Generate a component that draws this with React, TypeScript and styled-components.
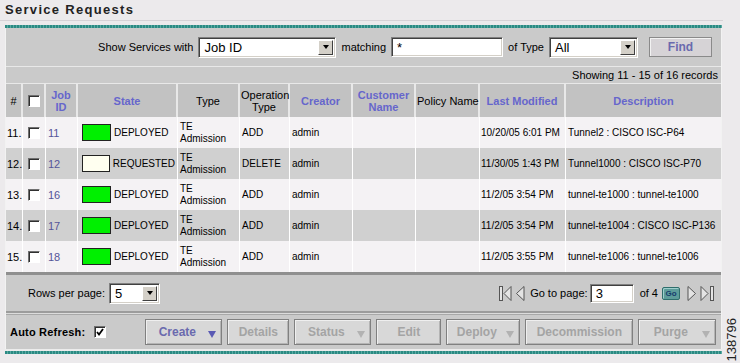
import React from 'react';
import styled, { createGlobalStyle } from 'styled-components';

const GlobalStyle = createGlobalStyle`
  html, body {
    margin: 0;
    padding: 0;
    background: #eceaec;
  }
  body {
    font-family: "Liberation Sans", Arial, sans-serif;
    color: #000;
  }
`;

const Page = styled.div`
  display: flex;
  width: 740px;
  height: 363px;
  overflow: hidden;
`;

const Main = styled.div`
  width: 723px;
  display: flex;
  flex-direction: column;
`;

const Side = styled.div`
  flex: 1;
  display: flex;
  flex-direction: column;
  justify-content: flex-end;
  align-items: center;
  padding-bottom: 2px;
`;

const FigureId = styled.span`
  writing-mode: vertical-rl;
  transform: rotate(180deg);
  font-size: 13px;
  color: #222;
`;

const Title = styled.h1`
  margin: 0;
  height: 20px;
  line-height: 20px;
  padding-left: 5px;
  font-size: 13px;
  font-weight: bold;
  letter-spacing: 1.3px;
  color: #222;
  border-bottom: 1px solid #d6d2d6;
`;

const Panel = styled.div`
  margin: 4px 0 0 5px;
  width: 717px;
  box-sizing: border-box;
  background: #cacaca;
  border-left: 1px solid #f2f2f2;
  border-right: 1px solid #f2f2f2;
`;

const TealBar = styled.div`
  height: 3px;
  margin: 0 -1px;
  background: repeating-linear-gradient(90deg, #2b8a83 0 2px, #5aaaa3 2px 3px);
`;

const LightLine = styled.div`
  height: 2px;
  margin: 0 -1px;
  background: #ececec;
`;

const FilterRow = styled.div`
  height: 38px;
  display: flex;
  align-items: center;
  justify-content: flex-end;
  gap: 5px;
  padding-right: 9px;
`;

const Label = styled.span<{ $ml?: number }>`
  font-size: 11px;
  white-space: nowrap;
  margin-left: ${p => p.$ml ?? 0}px;
`;

const Sunken = styled.div<{ $w: number; $h?: number; $ml?: number }>`
  width: ${p => p.$w}px;
  height: ${p => p.$h ?? 21}px;
  margin-left: ${p => p.$ml ?? 0}px;
  box-sizing: border-box;
  background: #fff;
  border-top: 1px solid #808080;
  border-left: 1px solid #808080;
  border-right: 1px solid #fff;
  border-bottom: 1px solid #fff;
  box-shadow: inset 1px 1px 0 #404040, inset -1px -1px 0 #d4d0c8;
  display: flex;
  align-items: center;
  justify-content: space-between;
  padding: 2px;
  font-size: 13px;
`;

const BoxText = styled.span`
  padding-left: 3px;
`;

const ArrowBtn = styled.span`
  width: 15px;
  height: 15px;
  box-sizing: border-box;
  background: #d4d0c8;
  border: 1px solid;
  border-color: #fff #404040 #404040 #fff;
  display: flex;
  align-items: center;
  justify-content: center;

  &::after {
    content: '';
    border-left: 3.5px solid transparent;
    border-right: 3.5px solid transparent;
    border-top: 4px solid #000;
  }
`;

const FindButton = styled.button`
  width: 63px;
  height: 20px;
  margin-left: 6px;
  background: #d6d3d6;
  border: 1px solid #8a8a8a;
  box-shadow: inset 1px 1px 0 #f2f2f2;
  font-family: "Liberation Sans", Arial, sans-serif;
  font-weight: bold;
  font-size: 12px;
  color: #6a6aae;
  padding: 0;
`;

const InfoRow = styled.div`
  height: 16px;
  line-height: 16px;
  border-top: 1px solid #e8e8e8;
  border-bottom: 1px solid #e8e8e8;
  text-align: right;
  padding-right: 3px;
  font-size: 11px;
`;

const Table = styled.table`
  width: 715px;
  table-layout: fixed;
  border-collapse: separate;
  border-spacing: 0;
`;

const Th = styled.th<{ $sort?: boolean }>`
  height: 33px;
  background: #c2c2c2;
  border-right: 2px solid #e8e8e8;
  padding: 0 1px;
  font-size: 11px;
  line-height: 12px;
  font-weight: ${p => (p.$sort ? 'bold' : 'normal')};
  color: ${p => (p.$sort ? '#6666cc' : '#000')};
  text-align: center;
  vertical-align: middle;
  white-space: nowrap;

  &:last-child {
    border-right: none;
  }
`;

const Tr = styled.tr<{ $alt: boolean }>`
  background: ${p => (p.$alt ? '#d0d0d0' : '#f4f2f4')};
`;

const Td = styled.td<{ $size?: number; $center?: boolean; $pl?: number }>`
  height: 31px;
  padding: 0 2px 0 ${p => p.$pl ?? 2}px;
  border-right: 1px solid #fff;
  font-size: ${p => p.$size ?? 10}px;
  line-height: 12px;
  vertical-align: middle;
  white-space: nowrap;
  overflow: hidden;
  text-align: ${p => (p.$center ? 'center' : 'left')};

  &:last-child {
    border-right: none;
  }
`;

const JobLink = styled.span`
  color: #555599;
`;

const StateCell = styled.div`
  display: flex;
  align-items: center;
  gap: 3px;
  padding-left: 2px;
`;

const Swatch = styled.span<{ $color: string }>`
  width: 29px;
  height: 17px;
  box-sizing: border-box;
  border: 1px solid #222;
  background: ${p => p.$color};
`;

const Check = styled.span`
  display: inline-flex;
  align-items: center;
  justify-content: center;
  width: 12px;
  height: 12px;
  box-sizing: border-box;
  background: #fff;
  border-top: 1px solid #707070;
  border-left: 1px solid #707070;
  border-right: 1px solid #fff;
  border-bottom: 1px solid #fff;
  box-shadow: inset 1px 1px 0 #303030;
  vertical-align: middle;
`;

const TableEnd = styled.div`
  height: 3px;
  background: #8f8f8f;
`;

const PagerRow = styled.div`
  height: 36px;
  display: flex;
  align-items: center;
  justify-content: space-between;
  padding: 0 6px 0 22px;
`;

const PagerGroup = styled.div<{ $gap?: number }>`
  display: flex;
  align-items: center;
  gap: ${p => p.$gap ?? 0}px;
`;

const NavIcon = styled.svg<{ $ml?: number }>`
  display: block;
  margin-left: ${p => p.$ml ?? 0}px;
`;

const GoButton = styled.span`
  width: 18px;
  height: 13px;
  box-sizing: border-box;
  border-radius: 2px;
  background: #5d9c9a;
  border: 1px solid #2f6e6c;
  box-shadow: inset 1px 1px 0 #9fcfcd;
  font-size: 8px;
  font-weight: bold;
  color: #173c6c;
  display: flex;
  align-items: center;
  justify-content: center;
  margin-left: 4px;
`;

const Divider = styled.div`
  height: 1px;
  border-top: 2px solid #9c9c9c;
  border-bottom: 1px solid #a8a8a8;
  background: #dcdcdc;
`;

const ActionRow = styled.div`
  height: 34px;
  display: flex;
  align-items: center;
  padding-left: 4px;
`;

const AutoLabel = styled.span`
  font-size: 11px;
  font-weight: bold;
  letter-spacing: 0.2px;
  margin-right: 9px;
`;

const Buttons = styled.div`
  display: flex;
  gap: 5px;
  margin-left: 39px;
`;

const ActionButton = styled.div<{ $w: number; $active?: boolean }>`
  width: ${p => p.$w}px;
  height: 26px;
  box-sizing: border-box;
  display: flex;
  align-items: center;
  background: #d8d8d8;
  border: 1px solid #808080;
  box-shadow: inset 1px 1px 0 #efefef, inset -1px -1px 0 #b4b4b4;
  font-size: 12px;
  font-weight: bold;
  color: ${p => (p.$active ? '#6a6aae' : '#a4a4a4')};
`;

const ButtonText = styled.span`
  flex: 1;
  text-align: center;
`;

const DropArrow = styled.span<{ $active?: boolean }>`
  width: 0;
  height: 0;
  margin: 5px 5px 0 0;
  border-left: 4px solid transparent;
  border-right: 4px solid transparent;
  border-top: 7px solid ${p => (p.$active ? '#5a5ab4' : '#b2b2b2')};
`;

type Row = {
  n: number;
  id: number;
  state: 'DEPLOYED' | 'REQUESTED';
  op: string;
  modified: string;
  desc: string;
};

const rows: Row[] = [
  { n: 11, id: 11, state: 'DEPLOYED', op: 'ADD', modified: '10/20/05 6:01 PM', desc: 'Tunnel2 : CISCO ISC-P64' },
  { n: 12, id: 12, state: 'REQUESTED', op: 'DELETE', modified: '11/30/05 1:43 PM', desc: 'Tunnel1000 : CISCO ISC-P70' },
  { n: 13, id: 16, state: 'DEPLOYED', op: 'ADD', modified: '11/2/05 3:54 PM', desc: 'tunnel-te1000 : tunnel-te1000' },
  { n: 14, id: 17, state: 'DEPLOYED', op: 'ADD', modified: '11/2/05 3:54 PM', desc: 'tunnel-te1004 : CISCO ISC-P136' },
  { n: 15, id: 18, state: 'DEPLOYED', op: 'ADD', modified: '11/2/05 3:55 PM', desc: 'tunnel-te1006 : tunnel-te1006' },
];

const colWidths = [17, 23, 32, 100, 62, 50, 63, 63, 64, 86, 155];

const stroke = '#555';
const fill = '#e4e4e4';

const FirstIcon = () => (
  <NavIcon width="14" height="17" viewBox="0 0 14 17">
    <rect x="1.5" y="1.5" width="3" height="14" fill={fill} stroke={stroke} />
    <polygon points="13,1.5 6,8.5 13,15.5" fill={fill} stroke={stroke} />
  </NavIcon>
);

const PrevIcon = () => (
  <NavIcon width="10" height="17" viewBox="0 0 10 17" $ml={3}>
    <polygon points="9,1.5 1.5,8.5 9,15.5" fill={fill} stroke={stroke} />
  </NavIcon>
);

const NextIcon = () => (
  <NavIcon width="10" height="17" viewBox="0 0 10 17" $ml={7}>
    <polygon points="1,1.5 8.5,8.5 1,15.5" fill={fill} stroke={stroke} />
  </NavIcon>
);

const LastIcon = () => (
  <NavIcon width="15" height="17" viewBox="0 0 15 17" $ml={3}>
    <polygon points="1,1.5 8,8.5 1,15.5" fill={fill} stroke={stroke} />
    <rect x="10.5" y="1.5" width="3" height="14" fill={fill} stroke={stroke} />
  </NavIcon>
);

const Tick = () => (
  <svg width="8" height="8" viewBox="0 0 8 8">
    <path d="M1 4 L3 6.5 L7 1" fill="none" stroke="#000" strokeWidth="1.8" />
  </svg>
);

const Select = ({ w, value }: { w: number; value: string }) => (
  <Sunken $w={w}>
    <BoxText>{value}</BoxText>
    <ArrowBtn />
  </Sunken>
);

const App: React.FC = () => {
  return (
    <>
      <GlobalStyle />
      <Page>
        <Main>
          <Title>Service Requests</Title>
          <Panel>
            <TealBar />
            <FilterRow>
              <Label>Show Services with</Label>
              <Select w={138} value="Job ID" />
              <Label>matching</Label>
              <Sunken $w={112} $h={20}>
                <BoxText>*</BoxText>
              </Sunken>
              <Label>of Type</Label>
              <Select w={89} value="All" />
              <FindButton>Find</FindButton>
            </FilterRow>
            <InfoRow>Showing 11 - 15 of 16 records</InfoRow>
            <Table>
              <colgroup>
                {colWidths.map((w, i) => (
                  <col key={i} style={{ width: w }} />
                ))}
              </colgroup>
              <thead>
                <tr>
                  <Th>#</Th>
                  <Th>
                    <Check />
                  </Th>
                  <Th $sort>
                    Job
                    <br />
                    ID
                  </Th>
                  <Th $sort>State</Th>
                  <Th>Type</Th>
                  <Th>
                    Operation
                    <br />
                    Type
                  </Th>
                  <Th $sort>Creator</Th>
                  <Th $sort>
                    Customer
                    <br />
                    Name
                  </Th>
                  <Th>Policy Name</Th>
                  <Th $sort>Last Modified</Th>
                  <Th $sort>Description</Th>
                </tr>
              </thead>
              <tbody>
                {rows.map((r, i) => (
                  <Tr key={r.n} $alt={i % 2 === 1}>
                    <Td $size={11} $pl={1}>
                      {r.n}.
                    </Td>
                    <Td $center>
                      <Check />
                    </Td>
                    <Td $size={11}>
                      <JobLink>{r.id}</JobLink>
                    </Td>
                    <Td>
                      <StateCell>
                        <Swatch $color={r.state === 'DEPLOYED' ? '#00f000' : '#fffff0'} />
                        {r.state}
                      </StateCell>
                    </Td>
                    <Td>
                      TE
                      <br />
                      Admission
                    </Td>
                    <Td>{r.op}</Td>
                    <Td>admin</Td>
                    <Td />
                    <Td />
                    <Td $pl={1}>{r.modified}</Td>
                    <Td>{r.desc}</Td>
                  </Tr>
                ))}
              </tbody>
            </Table>
            <TableEnd />
            <PagerRow>
              <PagerGroup $gap={4}>
                <Label>Rows per page:</Label>
                <Select w={51} value="5" />
              </PagerGroup>
              <PagerGroup>
                <FirstIcon />
                <PrevIcon />
                <Label $ml={5}>Go to page:</Label>
                <Sunken $w={44} $h={19} $ml={2}>
                  <BoxText>3</BoxText>
                </Sunken>
                <Label $ml={6}>of 4</Label>
                <GoButton>Go</GoButton>
                <NextIcon />
                <LastIcon />
              </PagerGroup>
            </PagerRow>
            <Divider />
            <ActionRow>
              <AutoLabel>Auto Refresh:</AutoLabel>
              <Check>
                <Tick />
              </Check>
              <Buttons>
                <ActionButton $w={77} $active>
                  <ButtonText>Create</ButtonText>
                  <DropArrow $active />
                </ActionButton>
                <ActionButton $w={62}>
                  <ButtonText>Details</ButtonText>
                </ActionButton>
                <ActionButton $w={77}>
                  <ButtonText>Status</ButtonText>
                  <DropArrow />
                </ActionButton>
                <ActionButton $w={65}>
                  <ButtonText>Edit</ButtonText>
                </ActionButton>
                <ActionButton $w={74}>
                  <ButtonText>Deploy</ButtonText>
                  <DropArrow />
                </ActionButton>
                <ActionButton $w={108}>
                  <ButtonText>Decommission</ButtonText>
                </ActionButton>
                <ActionButton $w={78}>
                  <ButtonText>Purge</ButtonText>
                  <DropArrow />
                </ActionButton>
              </Buttons>
            </ActionRow>
            <LightLine />
            <TealBar />
          </Panel>
        </Main>
        <Side>
          <FigureId>138796</FigureId>
        </Side>
      </Page>
    </>
  );
};

export default App;
